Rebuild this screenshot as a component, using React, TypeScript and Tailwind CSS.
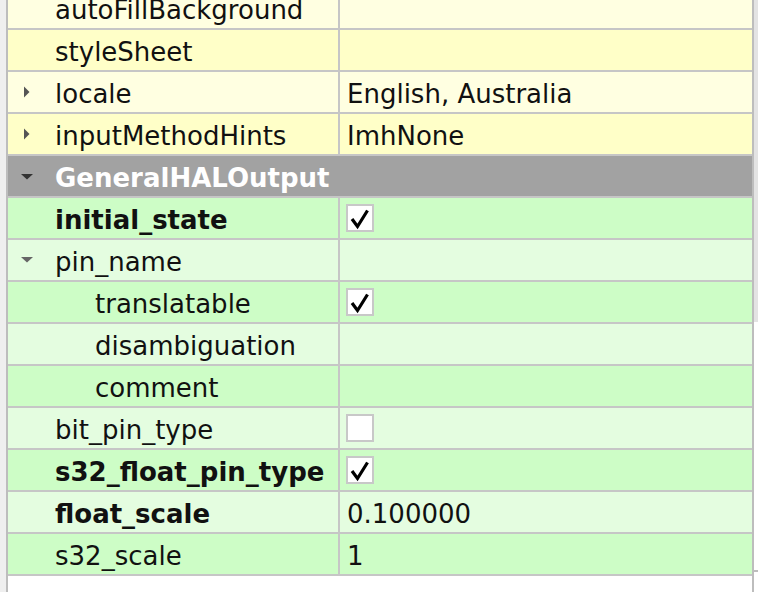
import React from "react";

type Row = {
  name: string;
  value?: string;
  check?: boolean;
  bold?: boolean;
  arrow?: "right" | "down";
  indent?: boolean;
  bg: string;
  header?: boolean;
};

const rows: Row[] = [
  { name: "autoFillBackground", bg: "bg-[#ffffe1]" },
  { name: "styleSheet", bg: "bg-[#ffffc8]" },
  { name: "locale", value: "English, Australia", arrow: "right", bg: "bg-[#ffffe1]" },
  { name: "inputMethodHints", value: "ImhNone", arrow: "right", bg: "bg-[#ffffc8]" },
  { name: "GeneralHALOutput", header: true, arrow: "down", bg: "bg-[#a2a2a2]" },
  { name: "initial_state", bold: true, check: true, bg: "bg-[#cdfdc6]" },
  { name: "pin_name", arrow: "down", bg: "bg-[#e4fde0]" },
  { name: "translatable", indent: true, check: true, bg: "bg-[#cdfdc6]" },
  { name: "disambiguation", indent: true, bg: "bg-[#e4fde0]" },
  { name: "comment", indent: true, bg: "bg-[#cdfdc6]" },
  { name: "bit_pin_type", check: false, bg: "bg-[#e4fde0]" },
  { name: "s32_float_pin_type", bold: true, check: true, bg: "bg-[#cdfdc6]" },
  { name: "float_scale", bold: true, value: "0.100000", bg: "bg-[#e4fde0]" },
  { name: "s32_scale", value: "1", bg: "bg-[#cdfdc6]" },
];

function Arrow({ dir, color }: { dir: "right" | "down"; color: string }) {
  if (dir === "right") {
    return (
      <svg width="8" height="14" viewBox="0 0 8 14" className="block">
        <path d="M1 1.5 L6.5 7 L1 12.5 Z" fill={color} />
      </svg>
    );
  }
  return (
    <svg width="14" height="8" viewBox="0 0 14 8" className="block">
      <path d="M1 1 L13 1 L7 6.5 Z" fill={color} />
    </svg>
  );
}

function CheckBox({ checked }: { checked: boolean }) {
  return (
    <div className="w-[28px] h-[28px] border-2 border-[#c8c8c8] bg-white flex items-center justify-center">
      {checked && (
        <svg width="24" height="24" viewBox="0 0 24 24" className="block">
          <path d="M4 13 L9.5 20.5 L19.5 4.5" fill="none" stroke="#000" strokeWidth="3.2" strokeLinejoin="miter" />
        </svg>
      )}
    </div>
  );
}

const textCls = "text-[26px] leading-[30px] pt-[3px]";

function PropRow({ row }: { row: Row }) {
  if (row.header) {
    return (
      <div className={`h-[42px] border-b-2 border-[#c6c6c6] ${row.bg} flex items-center`}>
        <div className="w-[38px] flex justify-center pt-[1px]">
          <Arrow dir="down" color="#333333" />
        </div>
        <span className={`font-bold text-white pl-[9px] ${textCls}`}>{row.name}</span>
      </div>
    );
  }
  return (
    <div className={`h-[42px] border-b-2 border-[#c6c6c6] ${row.bg} flex`}>
      <div className="w-[332px] border-r-2 border-[#c6c6c6] flex items-center">
        <div className="w-[38px] flex justify-center">
          {row.arrow && <Arrow dir={row.arrow} color={row.arrow === "down" ? "#666666" : "#555555"} />}
        </div>
        <span
          className={`${textCls} text-[#111111] whitespace-nowrap ${row.bold ? "font-bold" : ""} ${
            row.indent ? "pl-[49px]" : "pl-[9px]"
          }`}
        >
          {row.name}
        </span>
      </div>
      <div className="flex-1 flex items-center pl-[6px]">
        {row.check !== undefined ? (
          <CheckBox checked={row.check} />
        ) : row.value ? (
          <span className={`${textCls} pl-[1px] text-[#111111]`}>{row.value}</span>
        ) : null}
      </div>
    </div>
  );
}

export default function App() {
  return (
    <div className="w-[758px] h-[592px] flex bg-white overflow-hidden font-['DejaVu_Sans',_sans-serif]">
      <div className="w-[6px] bg-[#efefef]" />
      <div className="w-[2px] bg-[#bdbdbd]" />
      <div className="w-[744px] overflow-hidden">
        <div className="-mt-[12px]">
          {rows.map((r) => (
            <PropRow key={r.name} row={r} />
          ))}
        </div>
      </div>
      <div className="w-[2px] bg-[#bdbdbd]" />
      <div className="w-[4px] flex flex-col">
        <div className="h-[322px] bg-[#e3e3e3]" />
        <div className="h-[248px]" />
        <div className="h-[2px] bg-[#bdbdbd]" />
      </div>
    </div>
  );
}
